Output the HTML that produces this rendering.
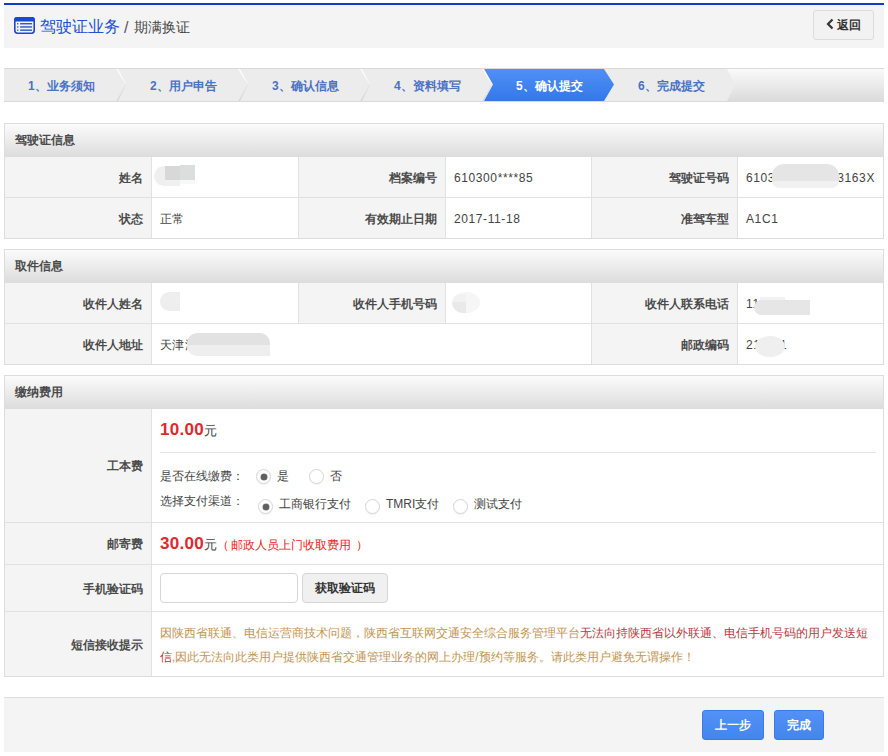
<!DOCTYPE html>
<html><head><meta charset="utf-8">
<style>
*{margin:0;padding:0;box-sizing:border-box}
html,body{width:888px;height:756px;overflow:hidden;background:#fff}
body{font-family:"Liberation Sans",sans-serif;font-size:12px;color:#333;position:relative}
.a{position:absolute;white-space:nowrap}
.ph{position:absolute;background:linear-gradient(#fbfbfb,#dcdcdc)}
.rd{position:absolute;width:15px;height:15px;border-radius:50%;border:1px solid #d6d6d6;background:#fff;box-shadow:0 1px 1px rgba(0,0,0,.05)}
.rd.on::after{content:"";position:absolute;left:3.5px;top:3.5px;width:6px;height:6px;border-radius:50%;background:#606060;box-shadow:0 0 0 .5px #777}
</style></head><body>

<div class="a" style="left:4px;top:3px;width:880px;height:2px;background:#0c3ec6;"></div>
<div class="a" style="left:4px;top:5px;width:880px;height:43px;background:#f4f4f4;"></div>
<svg class="a" style="left:14px;top:17px" width="21" height="17" viewBox="0 0 21 17">
  <rect x="0.8" y="0.8" width="19.4" height="15.4" rx="2.6" fill="none" stroke="#1b48cc" stroke-width="1.6"/>
  <path d="M0 4.4 V3 Q0 0 3 0 H18 Q21 0 21 3 V4.4 Z" fill="#1b48cc"/>
  <g fill="#1b48cc"><rect x="3.1" y="6.1" width="1.3" height="1.3"/><rect x="3.1" y="9.3" width="1.3" height="1.3"/><rect x="3.1" y="12.5" width="1.3" height="1.3"/>
  <rect x="6.1" y="6.1" width="12" height="1.3"/><rect x="6.1" y="9.3" width="12" height="1.3"/><rect x="6.1" y="12.5" width="12" height="1.3"/></g>
</svg>
<div class="a" style="left:40px;top:15px;line-height:24px;height:24px;font-size:16px;color:#2150d2;width:80.00px;text-align:justify;text-align-last:justify;">驾驶证业务</div>
<div class="a" style="left:124px;top:16px;line-height:24px;height:24px;font-size:16px;color:#555;">/</div>
<div class="a" style="left:134px;top:15px;line-height:24px;height:24px;font-size:14px;color:#444;width:56.00px;text-align:justify;text-align-last:justify;">期满换证</div>
<div class="a" style="left:813px;top:10px;width:61px;height:30px;background:#f2f2f2;border:1px solid #dcdcdc;border-radius:3px;"></div>
<svg class="a" style="left:826px;top:18px" width="8" height="12" viewBox="0 0 8 12"><path d="M6.5 1.5 L2 6 L6.5 10.5" fill="none" stroke="#333" stroke-width="2.2"/></svg>
<div class="a" style="left:837px;top:16px;line-height:18px;height:18px;font-size:12px;color:#333;font-weight:bold;width:24.00px;text-align:justify;text-align-last:justify;">返回</div>
<svg class="a" style="left:4px;top:68px" width="880" height="34" viewBox="0 0 880 34">
  <defs>
    <linearGradient id="g1" x1="0" y1="0" x2="0" y2="1"><stop offset="0" stop-color="#fbfbfb"/><stop offset="1" stop-color="#dadada"/></linearGradient>
    <linearGradient id="sw" x1="0" y1="0" x2="0" y2="1"><stop offset="0" stop-color="#fff"/><stop offset=".6" stop-color="#fff" stop-opacity=".8"/><stop offset="1" stop-color="#fff" stop-opacity=".2"/></linearGradient>
    <linearGradient id="sd" x1="0" y1="0" x2="0" y2="1"><stop offset="0" stop-color="#d4d4d4" stop-opacity=".2"/><stop offset="1" stop-color="#d4d4d4"/></linearGradient>
    <linearGradient id="gb" x1="0" y1="0" x2="0" y2="1"><stop offset="0" stop-color="#4f90f6"/><stop offset="1" stop-color="#3477ea"/></linearGradient>
  </defs>
  <rect x="0" y="0" width="880" height="34" fill="url(#g1)"/>
  <line x1="0" y1="0.5" x2="880" y2="0.5" stroke="#dadada"/>
  <line x1="0" y1="33.5" x2="880" y2="33.5" stroke="#dadada"/>
  <polygon points="0,1 723,1 731,16.5 723,33 0,33" fill="#ececec"/>
  <polygon points="480,1 600,1 610,16.5 600,33 480,33 489,16.5" fill="url(#gb)"/>
  <polygon points="112.4,1 113.9,1 122.6,16.5 121.4,16.5" fill="url(#sw)"/><polygon points="121.4,16.5 122.6,16.5 113.9,33 112.4,33" fill="url(#sd)"/><polygon points="234.4,1 235.9,1 244.6,16.5 243.4,16.5" fill="url(#sw)"/><polygon points="243.4,16.5 244.6,16.5 235.9,33 234.4,33" fill="url(#sd)"/><polygon points="356.4,1 357.9,1 366.6,16.5 365.4,16.5" fill="url(#sw)"/><polygon points="365.4,16.5 366.6,16.5 357.9,33 356.4,33" fill="url(#sd)"/><polygon points="478.4,1 479.9,1 488.6,16.5 487.4,16.5" fill="url(#sw)"/><polygon points="487.4,16.5 488.6,16.5 479.9,33 478.4,33" fill="url(#sd)"/>
</svg>
<div class="a" style="left:28px;top:77px;line-height:18px;height:18px;font-size:12px;color:#4a72c4;font-weight:bold;width:66.69px;text-align:justify;text-align-last:justify;">1、业务须知</div>
<div class="a" style="left:150px;top:77px;line-height:18px;height:18px;font-size:12px;color:#4a72c4;font-weight:bold;width:66.69px;text-align:justify;text-align-last:justify;">2、用户申告</div>
<div class="a" style="left:272px;top:77px;line-height:18px;height:18px;font-size:12px;color:#4a72c4;font-weight:bold;width:66.69px;text-align:justify;text-align-last:justify;">3、确认信息</div>
<div class="a" style="left:394px;top:77px;line-height:18px;height:18px;font-size:12px;color:#4a72c4;font-weight:bold;width:66.69px;text-align:justify;text-align-last:justify;">4、资料填写</div>
<div class="a" style="left:516px;top:77px;line-height:18px;height:18px;font-size:12px;color:#fff;font-weight:bold;width:66.69px;text-align:justify;text-align-last:justify;">5、确认提交</div>
<div class="a" style="left:638px;top:77px;line-height:18px;height:18px;font-size:12px;color:#4a72c4;font-weight:bold;width:66.69px;text-align:justify;text-align-last:justify;">6、完成提交</div>
<div class="a" style="left:4px;top:123px;width:880px;height:116px;background:#fff;border:1px solid #dddddd;"></div>
<div class="ph" style="left:5px;top:124px;width:878px;height:33px"></div>
<div class="a" style="left:15px;top:131px;line-height:18px;height:18px;font-size:12px;color:#4a4a4a;font-weight:bold;width:60.00px;text-align:justify;text-align-last:justify;">驾驶证信息</div>
<div class="a" style="left:5px;top:157px;width:146px;height:40px;background:#f4f4f4;"></div>
<div class="a" style="right:745px;top:158px;line-height:40px;height:40px;font-size:12px;color:#4a4a4a;font-weight:bold;width:24.00px;text-align:justify;text-align-last:justify;">姓名</div>
<div class="a" style="left:160px;top:158px;line-height:40px;height:40px;font-size:12px;color:#444;"></div>
<div class="a" style="left:151px;top:157px;width:1px;height:40px;background:#e1e1e1;"></div>
<div class="a" style="left:299px;top:157px;width:146px;height:40px;background:#f4f4f4;"></div>
<div class="a" style="right:451px;top:158px;line-height:40px;height:40px;font-size:12px;color:#4a4a4a;font-weight:bold;width:48.00px;text-align:justify;text-align-last:justify;">档案编号</div>
<div class="a" style="left:298px;top:157px;width:1px;height:40px;background:#e1e1e1;"></div>
<div class="a" style="left:454px;top:158px;line-height:40px;height:40px;font-size:12px;color:#444;"><span style="letter-spacing:.6px">610300****85</span></div>
<div class="a" style="left:445px;top:157px;width:1px;height:40px;background:#e1e1e1;"></div>
<div class="a" style="left:592px;top:157px;width:145px;height:40px;background:#f4f4f4;"></div>
<div class="a" style="right:159px;top:158px;line-height:40px;height:40px;font-size:12px;color:#4a4a4a;font-weight:bold;width:60.00px;text-align:justify;text-align-last:justify;">驾驶证号码</div>
<div class="a" style="left:591px;top:157px;width:1px;height:40px;background:#e1e1e1;"></div>
<div class="a" style="left:746px;top:158px;line-height:40px;height:40px;font-size:12px;color:#444;"><span style="letter-spacing:.6px">6103</span></div>
<div class="a" style="left:737px;top:157px;width:1px;height:40px;background:#e1e1e1;"></div>
<div class="a" style="left:5px;top:197px;width:878px;height:1px;background:#e1e1e1;"></div>
<div class="a" style="left:5px;top:198px;width:146px;height:40px;background:#f4f4f4;"></div>
<div class="a" style="right:745px;top:199px;line-height:40px;height:40px;font-size:12px;color:#4a4a4a;font-weight:bold;width:24.00px;text-align:justify;text-align-last:justify;">状态</div>
<div class="a" style="left:160px;top:199px;line-height:40px;height:40px;font-size:12px;color:#444;width:24.00px;text-align:justify;text-align-last:justify;">正常</div>
<div class="a" style="left:151px;top:198px;width:1px;height:40px;background:#e1e1e1;"></div>
<div class="a" style="left:299px;top:198px;width:146px;height:40px;background:#f4f4f4;"></div>
<div class="a" style="right:451px;top:199px;line-height:40px;height:40px;font-size:12px;color:#4a4a4a;font-weight:bold;width:72.00px;text-align:justify;text-align-last:justify;">有效期止日期</div>
<div class="a" style="left:298px;top:198px;width:1px;height:40px;background:#e1e1e1;"></div>
<div class="a" style="left:454px;top:199px;line-height:40px;height:40px;font-size:12px;color:#444;"><span style="letter-spacing:.6px">2017-11-18</span></div>
<div class="a" style="left:445px;top:198px;width:1px;height:40px;background:#e1e1e1;"></div>
<div class="a" style="left:592px;top:198px;width:145px;height:40px;background:#f4f4f4;"></div>
<div class="a" style="right:159px;top:199px;line-height:40px;height:40px;font-size:12px;color:#4a4a4a;font-weight:bold;width:48.00px;text-align:justify;text-align-last:justify;">准驾车型</div>
<div class="a" style="left:591px;top:198px;width:1px;height:40px;background:#e1e1e1;"></div>
<div class="a" style="left:746px;top:199px;line-height:40px;height:40px;font-size:12px;color:#444;"><span style="letter-spacing:.6px">A1C1</span></div>
<div class="a" style="left:737px;top:198px;width:1px;height:40px;background:#e1e1e1;"></div>
<div class="a" style="right:13px;top:158px;line-height:40px;height:40px;font-size:12px;color:#444;"><span style="letter-spacing:.6px">3163X</span></div>
<div class="a" style="left:154px;top:166px;width:11px;height:20px;background:#efefef;border-radius:10px 0 0 10px"></div>
<div class="a" style="left:165px;top:166px;width:15px;height:14px;background:#d8d8d8"></div>
<div class="a" style="left:180px;top:165px;width:15px;height:15px;background:#dcdddd"></div>
<div class="a" style="left:165px;top:180px;width:15px;height:6px;background:#f0f0f0"></div>
<div class="a" style="left:180px;top:180px;width:15px;height:4px;background:#f8f8f8"></div>
<div class="a" style="left:772px;top:164px;width:67px;height:17px;background:#e5e5e5;border-radius:12px 12px 0 0"></div>
<div class="a" style="left:772px;top:181px;width:67px;height:7px;background:#f1f1f1;border-radius:0 0 10px 10px"></div>
<div class="a" style="left:4px;top:249px;width:880px;height:116px;background:#fff;border:1px solid #dddddd;"></div>
<div class="ph" style="left:5px;top:250px;width:878px;height:33px"></div>
<div class="a" style="left:15px;top:257px;line-height:18px;height:18px;font-size:12px;color:#4a4a4a;font-weight:bold;width:48.00px;text-align:justify;text-align-last:justify;">取件信息</div>
<div class="a" style="left:5px;top:283px;width:146px;height:40px;background:#f4f4f4;"></div>
<div class="a" style="right:745px;top:284px;line-height:40px;height:40px;font-size:12px;color:#4a4a4a;font-weight:bold;width:60.00px;text-align:justify;text-align-last:justify;">收件人姓名</div>
<div class="a" style="left:160px;top:284px;line-height:40px;height:40px;font-size:12px;color:#444;"></div>
<div class="a" style="left:151px;top:283px;width:1px;height:40px;background:#e1e1e1;"></div>
<div class="a" style="left:299px;top:283px;width:146px;height:40px;background:#f4f4f4;"></div>
<div class="a" style="right:451px;top:284px;line-height:40px;height:40px;font-size:12px;color:#4a4a4a;font-weight:bold;width:84.00px;text-align:justify;text-align-last:justify;">收件人手机号码</div>
<div class="a" style="left:298px;top:283px;width:1px;height:40px;background:#e1e1e1;"></div>
<div class="a" style="left:454px;top:284px;line-height:40px;height:40px;font-size:12px;color:#444;"></div>
<div class="a" style="left:445px;top:283px;width:1px;height:40px;background:#e1e1e1;"></div>
<div class="a" style="left:592px;top:283px;width:145px;height:40px;background:#f4f4f4;"></div>
<div class="a" style="right:159px;top:284px;line-height:40px;height:40px;font-size:12px;color:#4a4a4a;font-weight:bold;width:84.00px;text-align:justify;text-align-last:justify;">收件人联系电话</div>
<div class="a" style="left:591px;top:283px;width:1px;height:40px;background:#e1e1e1;"></div>
<div class="a" style="left:746px;top:284px;line-height:40px;height:40px;font-size:12px;color:#444;"><span style="letter-spacing:.6px">11</span></div>
<div class="a" style="left:737px;top:283px;width:1px;height:40px;background:#e1e1e1;"></div>
<div class="a" style="left:5px;top:323px;width:878px;height:1px;background:#e1e1e1;"></div>
<div class="a" style="left:5px;top:324px;width:146px;height:40px;background:#f4f4f4;"></div>
<div class="a" style="right:745px;top:325px;line-height:40px;height:40px;font-size:12px;color:#4a4a4a;font-weight:bold;width:60.00px;text-align:justify;text-align-last:justify;">收件人地址</div>
<div class="a" style="left:160px;top:325px;line-height:40px;height:40px;font-size:12px;color:#444;width:37.00px;text-align:justify;text-align-last:justify;">天津<span style="margin-left:1px">泾</span></div>
<div class="a" style="left:151px;top:324px;width:1px;height:40px;background:#e1e1e1;"></div>
<div class="a" style="left:592px;top:324px;width:145px;height:40px;background:#f4f4f4;"></div>
<div class="a" style="right:159px;top:325px;line-height:40px;height:40px;font-size:12px;color:#4a4a4a;font-weight:bold;width:48.00px;text-align:justify;text-align-last:justify;">邮政编码</div>
<div class="a" style="left:591px;top:324px;width:1px;height:40px;background:#e1e1e1;"></div>
<div class="a" style="left:746px;top:325px;line-height:40px;height:40px;font-size:12px;color:#444;"><span style="letter-spacing:.6px">21</span></div>
<div class="a" style="left:737px;top:324px;width:1px;height:40px;background:#e1e1e1;"></div>
<div class="a" style="left:160px;top:292px;width:20px;height:19px;background:#eeeeee;border-radius:10px 0 0 10px"></div>
<div class="a" style="left:452px;top:292px;width:28px;height:21px;background:#f6f6f6;border-radius:50%"></div>
<div class="a" style="left:452px;top:302px;width:14px;height:11px;background:#e9e9e9;border-radius:0 0 0 11px"></div>
<div class="a" style="left:453px;top:294px;width:13px;height:8px;background:#f1f1f1;border-radius:8px 0 0 0"></div>
<div class="a" style="left:187px;top:333px;width:83px;height:12px;background:#e2e2e2;border-radius:10px 10px 0 0"></div>
<div class="a" style="left:187px;top:345px;width:83px;height:11px;background:#eeeeee;border-radius:0 0 0 10px"></div>
<div class="a" style="left:754px;top:300px;width:56px;height:15px;background:#e6e6e6;border-radius:8px 0 0 8px"></div>
<div class="a" style="left:760px;top:297px;width:25px;height:3px;background:#f2f2f2"></div>
<div class="a" style="left:780px;top:325px;line-height:40px;height:40px;font-size:12px;color:#444;">1</div>
<div class="a" style="left:755px;top:336px;width:30px;height:21px;background:#efefef;border-radius:50%"></div>
<div class="a" style="left:4px;top:375px;width:880px;height:302px;background:#fff;border:1px solid #dddddd;"></div>
<div class="ph" style="left:5px;top:376px;width:878px;height:33px"></div>
<div class="a" style="left:15px;top:383px;line-height:18px;height:18px;font-size:12px;color:#4a4a4a;font-weight:bold;width:48.00px;text-align:justify;text-align-last:justify;">缴纳费用</div>
<div class="a" style="left:5px;top:409px;width:146px;height:113px;background:#f4f4f4;"></div>
<div class="a" style="left:151px;top:409px;width:1px;height:113px;background:#e1e1e1;"></div>
<div class="a" style="right:745px;top:410px;line-height:113px;height:113px;font-size:12px;color:#4a4a4a;font-weight:bold;width:36.00px;text-align:justify;text-align-last:justify;">工本费</div>
<div class="a" style="left:5px;top:522px;width:878px;height:1px;background:#e1e1e1;"></div>
<div class="a" style="left:5px;top:523px;width:146px;height:41px;background:#f4f4f4;"></div>
<div class="a" style="left:151px;top:523px;width:1px;height:41px;background:#e1e1e1;"></div>
<div class="a" style="right:745px;top:524px;line-height:41px;height:41px;font-size:12px;color:#4a4a4a;font-weight:bold;width:36.00px;text-align:justify;text-align-last:justify;">邮寄费</div>
<div class="a" style="left:5px;top:564px;width:878px;height:1px;background:#e1e1e1;"></div>
<div class="a" style="left:5px;top:565px;width:146px;height:46px;background:#f4f4f4;"></div>
<div class="a" style="left:151px;top:565px;width:1px;height:46px;background:#e1e1e1;"></div>
<div class="a" style="right:745px;top:566px;line-height:46px;height:46px;font-size:12px;color:#4a4a4a;font-weight:bold;width:60.00px;text-align:justify;text-align-last:justify;">手机验证码</div>
<div class="a" style="left:5px;top:611px;width:878px;height:1px;background:#e1e1e1;"></div>
<div class="a" style="left:5px;top:612px;width:146px;height:64px;background:#f4f4f4;"></div>
<div class="a" style="left:151px;top:612px;width:1px;height:64px;background:#e1e1e1;"></div>
<div class="a" style="right:745px;top:613px;line-height:64px;height:64px;font-size:12px;color:#4a4a4a;font-weight:bold;width:72.00px;text-align:justify;text-align-last:justify;">短信接收提示</div>
<div class="a" style="left:160px;top:417px;line-height:26px;height:26px;font-size:12px;color:#444;width:57.05px;text-align:justify;text-align-last:justify;"><b style="font-size:17px;letter-spacing:.3px;color:#e0282e">10.00</b><span style="font-size:13px">元</span></div>
<div class="a" style="left:160px;top:452px;width:716px;height:1px;background:#e6e6e6;"></div>
<div class="a" style="left:160px;top:466px;line-height:20px;height:20px;font-size:12px;color:#444;width:84.00px;text-align:justify;text-align-last:justify;">是否在线缴费：</div>
<div class="rd on" style="left:256px;top:469px"></div>
<div class="a" style="left:277px;top:466px;line-height:20px;height:20px;font-size:12px;color:#444;width:12.00px;text-align:justify;text-align-last:justify;">是</div>
<div class="rd" style="left:309px;top:469px"></div>
<div class="a" style="left:330px;top:466px;line-height:20px;height:20px;font-size:12px;color:#444;width:12.00px;text-align:justify;text-align-last:justify;">否</div>
<div class="a" style="left:160px;top:491px;line-height:20px;height:20px;font-size:12px;color:#444;width:84.00px;text-align:justify;text-align-last:justify;">选择支付渠道：</div>
<div class="rd on" style="left:258px;top:499px"></div>
<div class="a" style="left:279px;top:494px;line-height:20px;height:20px;font-size:12px;color:#444;width:72.00px;text-align:justify;text-align-last:justify;">工商银行支付</div>
<div class="rd" style="left:365px;top:499px"></div>
<div class="a" style="left:386px;top:494px;line-height:20px;height:20px;font-size:12px;color:#444;width:53.33px;text-align:justify;text-align-last:justify;">TMRI支付</div>
<div class="rd" style="left:453px;top:499px"></div>
<div class="a" style="left:474px;top:494px;line-height:20px;height:20px;font-size:12px;color:#444;width:48.00px;text-align:justify;text-align-last:justify;">测试支付</div>
<div class="a" style="left:160px;top:531px;line-height:26px;height:26px;font-size:12px;color:#444;width:208.05px;text-align:justify;text-align-last:justify;"><b style="font-size:17px;letter-spacing:.3px;color:#e0282e">30.00</b><span style="font-size:13px">元</span><span style="color:#ec2222">（<span style="margin-left:2px">邮政人员上门收取费用</span><span style="margin-left:5px">）</span></span></div>
<div class="a" style="left:160px;top:573px;width:138px;height:30px;background:#fff;border:1px solid #d6d6d6;border-radius:4px;"></div>
<div class="a" style="left:302px;top:573px;width:86px;height:30px;background:#f0f0f0;border:1px solid #d6d6d6;border-radius:4px;"></div>
<div class="a" style="left:302px;top:573px;line-height:30px;height:30px;font-size:12px;color:#333;font-weight:bold;width:86px;text-align:center;"><span style="display:inline-block;width:60.00px;text-align:justify;text-align-last:justify;">获取验证码</span></div>
<div class="a" style="left:160px;top:621px;line-height:24px;height:24px;font-size:12px;color:#c29452;width:708.00px;text-align:justify;text-align-last:justify;">因陕西省联通、电信运营商技术问题，陕西省互联网交通安全综合服务管理平台<span style="color:#b83a44">无法向持陕西省以外联通、电信手机号码的用户发送短</span></div>
<div class="a" style="left:160px;top:645px;line-height:24px;height:24px;font-size:12px;color:#c29452;width:534.67px;text-align:justify;text-align-last:justify;"><span style="color:#b83a44">信</span>,因此无法向此类用户提供陕西省交通管理业务的网上办理/预约等服务。请此类用户避免无谓操作！</div>
<div class="a" style="left:4px;top:697px;width:880px;height:1px;background:#dedede;"></div>
<div class="a" style="left:4px;top:698px;width:880px;height:54px;background:#f4f4f4;"></div>
<div class="a" style="left:702px;top:710px;line-height:30px;height:30px;font-size:12px;color:#fff;font-weight:bold;width:62px;text-align:center;border-radius:3px;border:1px solid #3a7ae8;line-height:28px;background:linear-gradient(#5292f7,#4485ec);"><span style="display:inline-block;width:36.00px;text-align:justify;text-align-last:justify;">上一步</span></div>
<div class="a" style="left:774px;top:710px;line-height:30px;height:30px;font-size:12px;color:#fff;font-weight:bold;width:50px;text-align:center;border-radius:3px;border:1px solid #3a7ae8;line-height:28px;background:linear-gradient(#5292f7,#4485ec);"><span style="display:inline-block;width:24.00px;text-align:justify;text-align-last:justify;">完成</span></div>
</body></html>
